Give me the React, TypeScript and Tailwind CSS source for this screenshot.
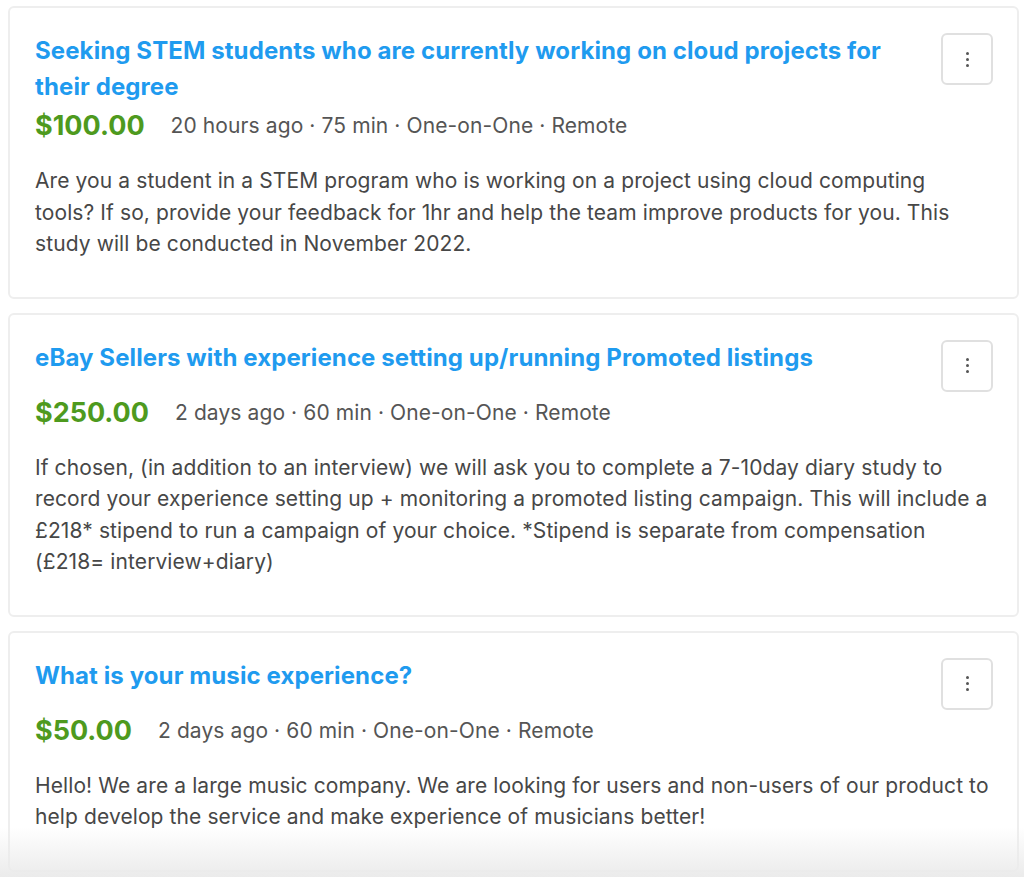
import React from "react";

type Study = {
  title: string;
  price: string;
  meta: string;
  desc: string;
};

const studies: Study[] = [
  {
    title:
      "Seeking STEM students who are currently working on cloud projects for their degree",
    price: "$100.00",
    meta: "20 hours ago · 75 min · One-on-One · Remote",
    desc: "Are you a student in a STEM program who is working on a project using cloud computing tools? If so, provide your feedback for 1hr and help the team improve products for you. This study will be conducted in November 2022.",
  },
  {
    title: "eBay Sellers with experience setting up/running Promoted listings",
    price: "$250.00",
    meta: "2 days ago · 60 min · One-on-One · Remote",
    desc: "If chosen, (in addition to an interview) we will ask you to complete a 7-10day diary study to record your experience setting up + monitoring a promoted listing campaign. This will include a £218* stipend to run a campaign of your choice. *Stipend is separate from compensation (£218= interview+diary)",
  },
  {
    title: "What is your music experience?",
    price: "$50.00",
    meta: "2 days ago · 60 min · One-on-One · Remote",
    desc: "Hello! We are a large music company. We are looking for users and non-users of our product to help develop the service and make experience of musicians better!",
  },
];

function Kebab() {
  return (
    <button className="flex h-[52px] w-[52px] shrink-0 flex-col items-center justify-center gap-[3px] rounded-[6px] border-2 border-[#e0e0e0] bg-white">
      <span className="block h-[3px] w-[3px] rounded-full bg-[#555]" />
      <span className="block h-[3px] w-[3px] rounded-full bg-[#555]" />
      <span className="block h-[3px] w-[3px] rounded-full bg-[#555]" />
    </button>
  );
}

function Card({ s }: { s: Study }) {
  return (
    <div className="rounded-[6px] border-2 border-[#eeeeee] bg-white pl-[25px] pr-[24px] pt-[25px] pb-[37px]">
      <div className="flex items-start justify-between gap-[40px]">
        <h2 className="text-[24px] font-bold leading-[36px] tracking-[0.1px] text-[#1f9bef]">
          {s.title}
        </h2>
        <Kebab />
      </div>
      <div className="mt-[3px] flex items-center gap-[26px] leading-[36px]">
        <span className="text-[27px] font-bold text-[#4e9a1e]">
          {s.price}
        </span>
        <span className="text-[21px] tracking-[0.1px] text-[#555555]">
          {s.meta}
        </span>
      </div>
      <p className="mt-[21px] pr-[4px] text-[21px] leading-[31.5px] tracking-[0.1px] text-[#474747]">
        {s.desc}
      </p>
    </div>
  );
}

export default function App() {
  return (
    <div
      className="relative h-[877px] overflow-hidden bg-white"
      style={{ fontFamily: "Inter, 'Noto Sans', sans-serif" }}
    >
      <div className="ml-[8px] mr-[5px] flex flex-col gap-[14px] pt-[6px]">
        {studies.map((s, i) => (
          <Card key={i} s={s} />
        ))}
      </div>
      <div className="pointer-events-none absolute inset-x-0 bottom-0 h-[50px] bg-gradient-to-b from-white/0 to-[#ebebeb]" />
    </div>
  );
}
